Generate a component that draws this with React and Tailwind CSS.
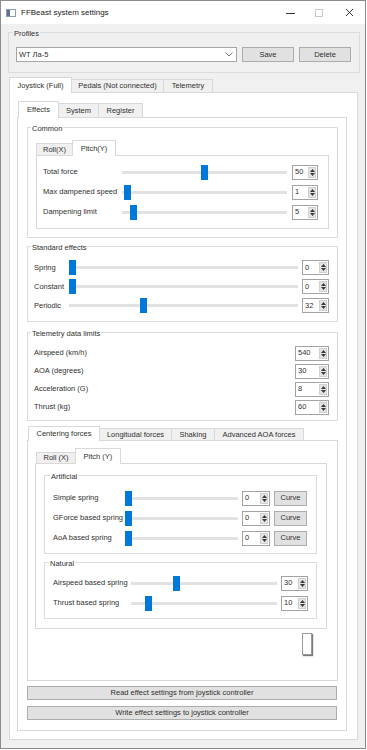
import React from "react";

function Tri({ up }) {
  return (
    <svg width="5" height="3" viewBox="0 0 5 3" className="block">
      <path d={up ? "M0 3 L2.5 0 L5 3Z" : "M0 0 L2.5 3 L5 0Z"} fill="#3a3a3a" />
    </svg>
  );
}

function Spin({ value, w }) {
  return (
    <div className={`${w} h-[15px] shrink-0 border border-[#a3a3a3] bg-white flex`}>
      <div className="flex-1 pl-[2px] flex items-center">{value}</div>
      <div className="w-[8px] my-[1px] mr-[1px] bg-[#e4e4e4] border border-[#d0d0d0] flex flex-col items-center justify-center gap-[1px]">
        <Tri up />
        <Tri />
      </div>
    </div>
  );
}

function Slider({ w, value }) {
  return (
    <div className={`${w} relative h-[15px] flex items-center shrink-0`}>
      <div className="w-full h-[3px] bg-[#e2e2e2]" />
      <div
        className="absolute top-0 w-[7px] h-[15px] bg-[#0078d7]"
        style={{ left: `calc(${value / 100} * (100% - 7px))` }}
      />
    </div>
  );
}

function Tab({ label, w, h, sel, first }) {
  return (
    <div
      className={`${w} ${h} ${first ? "" : "-ml-px"} ${
        sel ? "relative z-10 -mb-px bg-white" : "bg-[#f0f0f0]"
      } border border-b-0 border-[#d9d9d9] flex items-center justify-center whitespace-nowrap shrink-0`}
    >
      {label}
    </div>
  );
}

function Group({ title, className, titleBg, tx, children }) {
  return (
    <div className={`relative border border-[#dcdcdc] shrink-0 ${className}`}>
      <span className={`absolute -top-[4px] ${tx} px-[1px] leading-[10px] ${titleBg}`}>{title}</span>
      {children}
    </div>
  );
}

function Btn({ children, className }) {
  return (
    <div className={`bg-[#e1e1e1] border border-[#adadad] flex items-center justify-center shrink-0 ${className}`}>
      {children}
    </div>
  );
}

export default function App() {
  return (
    <div className="w-[366px] h-[749px] border border-[#8c8c8c] bg-[#f0f0f0] flex flex-col overflow-hidden font-['Liberation_Sans',Arial,sans-serif] text-[7.5px] text-[#303030]">
      {/* Title bar */}
      <div className="h-[23px] bg-white flex items-center shrink-0">
        <svg width="10" height="8" viewBox="0 0 10 8" className="ml-[5px]">
          <rect x="0.5" y="0.5" width="9" height="7" fill="#fff" stroke="#8d9bb0" />
          <rect x="1" y="1" width="3" height="6" fill="#5e7290" />
        </svg>
        <span className="ml-[5px] text-[8px] text-[#222]">FFBeast system settings</span>
        <div className="flex-1" />
        <svg width="10" height="10" viewBox="0 0 10 10" className="mr-[19px]">
          <path d="M1 5.5 H10" stroke="#333" strokeWidth="1" />
        </svg>
        <svg width="10" height="10" viewBox="0 0 10 10" className="mr-[21px]">
          <rect x="1.5" y="1.5" width="7" height="7" fill="none" stroke="#c9c9c9" />
        </svg>
        <svg width="9" height="9" viewBox="0 0 9 9" className="mr-[11px]">
          <path d="M1 1 L8 8 M8 1 L1 8" stroke="#222" strokeWidth="0.9" />
        </svg>
      </div>

      {/* Profiles */}
      <Group title="Profiles" titleBg="bg-[#f0f0f0]" tx="left-[4px]" className="ml-[7px] mt-[8px] w-[352px] h-[41px] pl-[7px] pt-[14px]">
        <div className="flex">
          <div className="w-[221px] h-[15px] border border-[#a6a6a6] bg-white flex items-center pl-[2px]">
            <span className="flex-1">WT Ла-5</span>
            <svg width="8" height="5" viewBox="0 0 8 5" className="mr-[3px]">
              <path d="M0.5 0.5 L4 4 L7.5 0.5" fill="none" stroke="#555" strokeWidth="0.8" />
            </svg>
          </div>
          <Btn className="ml-[5px] w-[52px] h-[15px]">Save</Btn>
          <Btn className="ml-[5px] w-[52px] h-[15px]">Delete</Btn>
        </div>
      </Group>

      {/* Main tab widget */}
      <div className="ml-[8px] mt-[4px] w-[349px] flex flex-col">
        <div className="flex items-end">
          <Tab first sel label="Joystick (Full)" w="w-[63px]" h="h-[16px]" />
          <Tab label="Pedals (Not connected)" w="w-[93px]" h="h-[13px]" />
          <Tab label="Telemetry" w="w-[50px]" h="h-[13px]" />
        </div>
        <div className="h-[648px] border border-[#d9d9d9] bg-white flex flex-col">
          {/* Effects tab widget */}
          <div className="ml-[7px] mt-[8px] w-[330px] flex flex-col">
            <div className="flex items-end ml-[1px]">
              <Tab first sel label="Effects" w="w-[41px]" h="h-[17px]" />
              <Tab label="System" w="w-[41px]" h="h-[14px]" />
              <Tab label="Register" w="w-[45px]" h="h-[14px]" />
            </div>
            <div className="h-[614px] border border-[#d9d9d9] bg-white flex flex-col">
              {/* Common */}
              <Group title="Common" titleBg="bg-white" tx="left-[3px]" className="ml-[9px] mt-[9px] w-[311px] h-[111px]">
                <div className="ml-[8px] mt-[12px] w-[293px] flex flex-col">
                  <div className="flex items-end">
                    <Tab first label="Roll(X)" w="w-[37px]" h="h-[12px]" />
                    <Tab sel label="Pitch(Y)" w="w-[44px]" h="h-[16px]" />
                  </div>
                  <div className="h-[74px] border border-[#d9d9d9] bg-white pt-[6px] pl-[6px]">
                    {[
                      ["Total force", 50],
                      ["Max dampened speed", 1],
                      ["Dampening limit", 5],
                    ].map(([l, v]) => (
                      <div key={l} className="h-[20px] flex items-center">
                        <span className="w-[79px] shrink-0 whitespace-nowrap">{l}</span>
                        <Slider w="w-[165px]" value={v} />
                        <div className="ml-[5px]">
                          <Spin value={v} w="w-[26px]" />
                        </div>
                      </div>
                    ))}
                  </div>
                </div>
              </Group>

              {/* Standard effects */}
              <Group title="Standard effects" titleBg="bg-white" tx="left-[3px]" className="ml-[9px] mt-[8px] w-[311px] h-[76px] pt-[11px] pl-[6px]">
                {[
                  ["Spring", 0],
                  ["Constant", 0],
                  ["Periodic", 32],
                ].map(([l, v]) => (
                  <div key={l} className="h-[19px] flex items-center">
                    <span className="w-[35px] shrink-0 whitespace-nowrap">{l}</span>
                    <Slider w="w-[229px]" value={v} />
                    <div className="ml-[4px]">
                      <Spin value={v} w="w-[27px]" />
                    </div>
                  </div>
                ))}
              </Group>

              {/* Telemetry data limits */}
              <Group title="Telemetry data limits" titleBg="bg-white" tx="left-[3px]" className="ml-[9px] mt-[10px] w-[311px] h-[89px] pt-[11px] pl-[6px] pr-[8px]">
                {[
                  ["Airspeed (km/h)", 540],
                  ["AOA (degrees)", 30],
                  ["Acceleration (G)", 8],
                  ["Thrust (kg)", 60],
                ].map(([l, v]) => (
                  <div key={l} className="h-[18px] flex items-center justify-between">
                    <span className="whitespace-nowrap">{l}</span>
                    <Spin value={v} w="w-[34px]" />
                  </div>
                ))}
              </Group>

              {/* Centering forces tab widget */}
              <div className="ml-[9px] mt-[5px] w-[311px] flex flex-col">
                <div className="flex items-end ml-[1px]">
                  <Tab first sel label="Centering forces" w="w-[72px]" h="h-[15px]" />
                  <Tab label="Longitudal forces" w="w-[73px]" h="h-[12px]" />
                  <Tab label="Shaking" w="w-[44px]" h="h-[12px]" />
                  <Tab label="Advanced AOA forces" w="w-[90px]" h="h-[12px]" />
                </div>
                <div className="h-[241px] border border-[#d9d9d9] bg-white flex flex-col">
                  <div className="ml-[7px] mt-[7px] w-[292px] flex flex-col">
                    <div className="flex items-end ml-[1px]">
                      <Tab first label="Roll (X)" w="w-[40px]" h="h-[11px]" />
                      <Tab sel label="Pitch (Y)" w="w-[46px]" h="h-[16px]" />
                    </div>
                    <div className="h-[166px] border border-[#d9d9d9] bg-white flex flex-col">
                      <Group title="Artificial" titleBg="bg-white" tx="left-[5px]" className="ml-[8px] mt-[11px] w-[273px] h-[79px] pt-[12px] pl-[8px]">
                        {["Simple spring", "GForce based spring", "AoA based spring"].map((l) => (
                          <div key={l} className="h-[20px] flex items-center">
                            <span className="w-[72px] shrink-0 whitespace-nowrap">{l}</span>
                            <Slider w="w-[113px]" value={0} />
                            <div className="ml-[4px]">
                              <Spin value={0} w="w-[28px]" />
                            </div>
                            <Btn className="ml-[4px] w-[33px] h-[15px]">Curve</Btn>
                          </div>
                        ))}
                      </Group>
                      <Group title="Natural" titleBg="bg-white" tx="left-[4px]" className="ml-[8px] mt-[8px] w-[273px] h-[57px] pt-[10px] pl-[8px]">
                        {[
                          ["Airspeed based spring", 30],
                          ["Thrust based spring", 10],
                        ].map(([l, v]) => (
                          <div key={l} className="h-[20px] flex items-center">
                            <span className="w-[78px] shrink-0 whitespace-nowrap">{l}</span>
                            <Slider w="w-[146px]" value={v} />
                            <div className="ml-[4px]">
                              <Spin value={v} w="w-[27px]" />
                            </div>
                          </div>
                        ))}
                      </Group>
                    </div>
                  </div>
                  <div className="ml-[274px] mt-[4px] w-[10px] h-[22px] border border-[#9a9a9a] bg-white shadow-[1px_1px_1px_#7a7a7a]" />
                </div>
              </div>

              <Btn className="ml-[9px] mt-[5px] w-[310px] h-[14px]">Read effect settings from joystick controller</Btn>
              <Btn className="ml-[9px] mt-[6px] w-[310px] h-[14px]">Write effect settings to joystick controller</Btn>
            </div>
          </div>
        </div>
      </div>
    </div>
  );
}
